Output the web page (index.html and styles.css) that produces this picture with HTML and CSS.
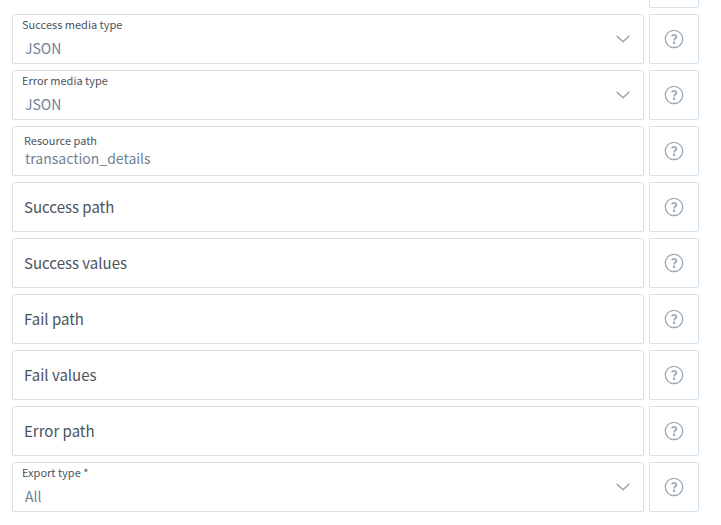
FILE: index.html
```html
<!DOCTYPE html>
<html lang="en">
<head>
  <meta charset="UTF-8">
  <title>Export settings</title>
  <link rel="stylesheet" href="styles.css">
</head>
<body>

  <!-- Shared icons -->
  <svg class="icon-defs" aria-hidden="true">
    <symbol id="icon-help" viewBox="0 0 20 20">
      <circle cx="10" cy="10" r="8.7" fill="none" stroke="currentColor" stroke-width="1.3"/>
      <path d="M7.6 7.1C8.3 6.3 9.1 5.9 10.1 5.9C11.5 5.9 12.3 6.6 12.3 7.7C12.3 9.3 10 9.6 10.1 11.5" fill="none" stroke="currentColor" stroke-width="1.8"/>
      <circle cx="10.1" cy="13.7" r="1.2" fill="currentColor"/>
    </symbol>
    <symbol id="icon-chevron" viewBox="0 0 14 8">
      <path d="M0.6 0.8L7 6.8L13.4 0.8" fill="none" stroke="currentColor" stroke-width="1.3"/>
    </symbol>
  </svg>

  <form class="settings">
    <div class="row row-cut">
      <button type="button" class="help" aria-label="Help"></button>
    </div>

    <div class="row">
      <div class="field field-select">
        <label for="successMedia">Success media type</label>
        <select id="successMedia"><option>JSON</option></select>
        <svg class="chevron"><use href="#icon-chevron"/></svg>
      </div>
      <button type="button" class="help" aria-label="Help"><svg><use href="#icon-help"/></svg></button>
    </div>

    <div class="row">
      <div class="field field-select">
        <label for="errorMedia">Error media type</label>
        <select id="errorMedia"><option>JSON</option></select>
        <svg class="chevron"><use href="#icon-chevron"/></svg>
      </div>
      <button type="button" class="help" aria-label="Help"><svg><use href="#icon-help"/></svg></button>
    </div>

    <div class="row">
      <div class="field field-filled">
        <label for="resourcePath">Resource path</label>
        <input type="text" id="resourcePath" value="transaction_details">
      </div>
      <button type="button" class="help" aria-label="Help"><svg><use href="#icon-help"/></svg></button>
    </div>

    <div class="row">
      <div class="field">
        <label for="successPath">Success path</label>
        <input type="text" id="successPath">
      </div>
      <button type="button" class="help" aria-label="Help"><svg><use href="#icon-help"/></svg></button>
    </div>

    <div class="row">
      <div class="field">
        <label for="successValues">Success values</label>
        <input type="text" id="successValues">
      </div>
      <button type="button" class="help" aria-label="Help"><svg><use href="#icon-help"/></svg></button>
    </div>

    <div class="row">
      <div class="field">
        <label for="failPath">Fail path</label>
        <input type="text" id="failPath">
      </div>
      <button type="button" class="help" aria-label="Help"><svg><use href="#icon-help"/></svg></button>
    </div>

    <div class="row">
      <div class="field">
        <label for="failValues">Fail values</label>
        <input type="text" id="failValues">
      </div>
      <button type="button" class="help" aria-label="Help"><svg><use href="#icon-help"/></svg></button>
    </div>

    <div class="row">
      <div class="field">
        <label for="errorPath">Error path</label>
        <input type="text" id="errorPath">
      </div>
      <button type="button" class="help" aria-label="Help"><svg><use href="#icon-help"/></svg></button>
    </div>

    <div class="row">
      <div class="field field-select">
        <label for="exportType">Export type *</label>
        <select id="exportType" required><option>All</option></select>
        <svg class="chevron"><use href="#icon-chevron"/></svg>
      </div>
      <button type="button" class="help" aria-label="Help"><svg><use href="#icon-help"/></svg></button>
    </div>
  </form>

</body>
</html>
```

FILE: styles.css
```css
* {
  box-sizing: border-box;
}

body {
  margin: 0;
  background-color: #fff;
  color: #4a545e;
  font-family: "Noto Sans CJK SC", "Noto Sans", sans-serif;
  font-size: 15px;
}

.icon-defs {
  display: none;
}

.settings {
  display: flex;
  flex-direction: column;
  gap: 6px;
  padding: 0 22px 12px 12px;
}

.row {
  display: flex;
  gap: 5px;
  height: 50px;
}

/* bottom edge of the row scrolled off the top */
.row-cut {
  height: 8px;
  justify-content: flex-end;
  align-items: flex-end;
  overflow: hidden;
}

.field,
.help {
  border: 1px solid #d6e2eb;
  border-radius: 2px;
  background-color: #fff;
}

.field {
  position: relative;
  flex: 1;
}

.field input,
.field select {
  display: block;
  width: 100%;
  height: 100%;
  margin: 0;
  padding: 0 12px;
  border: none;
  outline: none;
  background: transparent;
  color: #6f8294;
  font: inherit;
  font-size: 14px;
  appearance: none;
}

/* labels float over their control */
.field label {
  position: absolute;
  top: 0;
  left: 11px;
  line-height: 48px;
  pointer-events: none;
}

.field-select label,
.field-filled label {
  font-size: 11px;
  line-height: 16px;
}

.field-select label {
  top: 1px;
  left: 9px;
}

.field-filled label {
  top: 5px;
}

.field-select select {
  padding-top: 18px;
}

.field-filled input {
  padding-top: 14px;
}

.chevron {
  position: absolute;
  top: 20px;
  right: 13px;
  width: 14px;
  height: 8px;
  color: #8fa5b8;
  pointer-events: none;
}

.help {
  display: flex;
  flex: none;
  align-items: center;
  justify-content: center;
  width: 50px;
  height: 50px;
  padding: 0;
  color: #94a9bb;
  cursor: pointer;
}

.help svg {
  width: 20px;
  height: 20px;
}
```
